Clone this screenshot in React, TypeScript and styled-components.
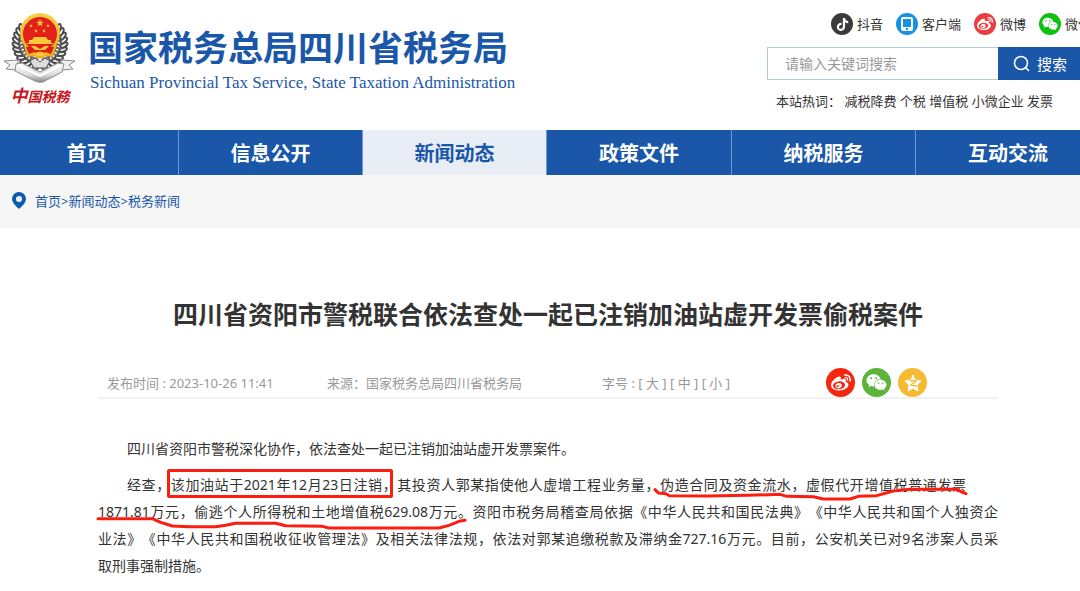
import React from "react";
import styled, { createGlobalStyle, css } from "styled-components";
import { FaTiktok, FaWeibo, FaWeixin } from "react-icons/fa";

const blue = "#1a57a8";
const marker = "#fb1d10";

const GlobalStyle = createGlobalStyle`
  *, *::before, *::after { box-sizing: border-box; }
  body {
    margin: 0;
    background: #fff;
    color: #333;
    font-family: "Noto Sans", "Noto Sans CJK SC", sans-serif;
    font-size: 13px;
    overflow-x: hidden;
  }
  a { color: inherit; text-decoration: none; }
`;

const Header = styled.header`
  display: flex;
  justify-content: space-between;
  height: 130px;
  overflow: hidden;
`;

const Brand = styled.a`
  display: flex;
  gap: 11px;
  padding: 12px 0 0 3px;
  color: ${blue};
  white-space: nowrap;
`;

const EmblemColumn = styled.div`
  display: flex;
  flex-direction: column;
  align-items: center;
  width: 74px;
`;

const EmblemCaption = styled.span`
  color: #c8171e;
  font: italic bold 14px/22px "Noto Sans CJK SC", sans-serif;
`;

const EmblemInitial = styled.span`
  font-size: 17px;
`;

const BrandText = styled.div`
  padding-top: 12px;
`;

const BrandName = styled.div`
  font: bold 35px/44px "Noto Sans CJK SC", sans-serif;
`;

const BrandEnglish = styled.div`
  padding: 2px 0 0 2px;
  font: 17px/26px "Liberation Serif", serif;
`;

const Tools = styled.div`
  flex: none;
  width: 313px;
`;

const Socials = styled.div`
  display: flex;
  gap: 13px;
  height: 47px;
  padding: 13px 0 0 64px;
`;

const SocialLink = styled.a`
  display: flex;
  flex: none;
  gap: 4px;
  height: 22px;
  line-height: 22px;
`;

const Disc = styled.span<{ $color: string; $size: number }>`
  display: flex;
  flex: none;
  align-items: center;
  justify-content: center;
  width: ${(p) => p.$size}px;
  height: ${(p) => p.$size}px;
  border-radius: 50%;
  background: ${(p) => p.$color};
  color: #fff;
`;

const SearchForm = styled.form`
  display: flex;
  height: 33px;
`;

const SearchInput = styled.input`
  flex: 1;
  min-width: 0;
  padding: 0 17px;
  border: 1px solid #b5c8e0;
  border-right: 0;
  border-radius: 0;
  outline: 0;
  font: 14px "Noto Sans", "Noto Sans CJK SC", sans-serif;
  &::placeholder { color: #999; }
`;

const SearchButton = styled.button`
  display: flex;
  align-items: center;
  gap: 7px;
  width: 82px;
  padding: 0 0 0 15px;
  border: 0;
  background: ${blue};
  color: #fff;
  font: 15px "Noto Sans", "Noto Sans CJK SC", sans-serif;
  white-space: nowrap;
`;

const HotWords = styled.div`
  padding: 11px 0 0 9px;
  line-height: 20px;
  white-space: nowrap;
`;

const Nav = styled.nav`
  display: grid;
  grid-template-columns: 179fr 184fr 184fr 185fr 184fr 164fr;
  height: 45px;
  background: ${blue};
`;

const NavLink = styled.a<{ $active?: boolean }>`
  border-right: 1px solid #6f97c9;
  color: #fff;
  font: bold 20px/45px "Noto Sans CJK SC", sans-serif;
  text-align: center;
  white-space: nowrap;
  &:first-child { padding-right: 5px; }
  &:last-child { padding-left: 20px; border-right: 0; }
  ${(p) =>
    p.$active &&
    css`
      background: #e8edf6;
      color: ${blue};
    `}
`;

const Breadcrumb = styled.div`
  display: flex;
  align-items: center;
  gap: 9px;
  height: 53px;
  padding: 0 0 2px 12px;
  background: #f6f6f6;
  color: ${blue};
`;

const Article = styled.article`
  padding: 62px 82px 0 98px;
`;

const Title = styled.h1`
  margin: 0;
  font: bold 25px/46px "Noto Sans CJK SC", sans-serif;
  text-align: center;
`;

const Meta = styled.div`
  display: grid;
  grid-template-columns: 220px 275px 224px 1fr;
  height: 63px;
  padding: 32px 0 0 9px;
  border-bottom: 2px solid #f2f2f2;
  color: #999;
  line-height: 30px;
  white-space: nowrap;
`;

const Share = styled.div`
  display: flex;
  gap: 7px;
`;

const SizeButton = styled.button`
  padding: 0;
  border: 0;
  background: none;
  color: inherit;
  font: inherit;
`;

const Content = styled.div`
  padding-top: 36px;
  font-size: 14px;
  line-height: 27px;
  white-space: nowrap;
  text-spacing-trim: space-all;
`;

const Paragraph = styled.p`
  margin: 0 0 9px;
`;

const Line = styled.span<{ $indent?: boolean; $full?: boolean; $inset?: number }>`
  display: block;
  padding-left: ${(p) => (p.$indent ? 29 : 0)}px;
  padding-right: ${(p) => p.$inset ?? 0}px;
  white-space: normal;
  text-align-last: ${(p) => (p.$full ? "justify" : "left")};
`;

const Boxed = styled.span`
  position: relative;
  &::after {
    content: "";
    position: absolute;
    inset: -6px -10px -4px -4px;
    border: 3px solid ${marker};
    border-radius: 2px;
  }
`;

const Underlined = styled.span`
  position: relative;
`;

const Scribble = styled.svg<{ $top: number }>`
  position: absolute;
  left: 0;
  top: ${(p) => p.$top}px;
  overflow: visible;
  fill: none;
  stroke: ${marker};
  stroke-width: 9;
  stroke-linecap: round;
  stroke-linejoin: round;
`;

const wreath = Array.from({ length: 12 }, (_, i) => {
  const r = 98 + i * 11;
  const t = (r * Math.PI) / 180;
  return { x: 37 + Math.cos(t) * 24, y: 31 + Math.sin(t) * 24, r };
});

function Leaves() {
  return (
    <g>
      {wreath.map((l, i) => (
        <g key={i} transform={`translate(${l.x} ${l.y}) rotate(${l.r})`}>
          <ellipse rx="5" ry="3" fill="#4b4b4b" transform="rotate(35)" />
          <ellipse rx="3" ry="1" fill="#f2f2f2" transform="rotate(35)" />
          <ellipse cx="-5" cy="2" rx="4" ry="3" fill="#666" />
          <ellipse cx="-5" cy="2" rx="2" ry="1" fill="#fff" />
        </g>
      ))}
    </g>
  );
}

function star(cx: number, cy: number, r: number) {
  return Array.from({ length: 10 }, (_, i) => {
    const a = (-90 + i * 36) * (Math.PI / 180);
    const d = i % 2 ? r * 0.42 : r;
    return `${cx + Math.cos(a) * d},${cy + Math.sin(a) * d}`;
  }).join(" ");
}

function Emblem() {
  return (
    <svg width="74" height="72" viewBox="0 0 74 72" aria-hidden="true">
      <defs>
        <linearGradient id="silver" x1="0" y1="0" x2="0" y2="1">
          <stop offset="0" stopColor="#fff" />
          <stop offset="0.6" stopColor="#dcdcdc" />
          <stop offset="1" stopColor="#888" />
        </linearGradient>
        <linearGradient id="gold" x1="0" y1="0" x2="0" y2="1">
          <stop offset="0" stopColor="#fbd04a" />
          <stop offset="1" stopColor="#efae1c" />
        </linearGradient>
      </defs>
      <Leaves />
      <g transform="translate(74 0) scale(-1 1)">
        <Leaves />
      </g>
      <path d="m27 49 5-3 5 4 5-4 5 3-4 7H31z" fill="#ddd" stroke="#555" strokeWidth="1" />
      <circle cx="37" cy="21" r="20" fill="url(#gold)" />
      <path d="m21 33 33 0-4 12-6-1-7 3-7-3-6 1z" fill="#efae1c" />
      <circle cx="37" cy="22" r="17" fill="#e3211b" />
      <path d="m23 35 6 0 8 4 8-4h6l-3 7-5-2-6 3-6-3-5 2z" fill="#d91f1a" />
      <polygon points={star(37, 11, 4)} fill="#fbc93a" />
      <polygon points={star(28, 14, 2)} fill="#fbc93a" />
      <polygon points={star(45, 14, 2)} fill="#fbc93a" />
      <polygon points={star(33, 19, 2)} fill="#fbc93a" />
      <polygon points={star(41, 19, 2)} fill="#fbc93a" />
      <path d="M31 25h12l2 3h3v3h2v1H24v-1h2v-3h3z" fill="#fbc93a" />
      <path d="m28 34 4 0 5 3 5-3h4l-4 4H32z" fill="#fbc93a" />
      <path d="M31 42q6-5 12 0l-3 2h-6z" fill="#fbc93a" />
      <path d="m1 49 14-1-1 10-11-1 4-4zM72 49l-14-1 1 10 11-1-4-4z" fill="#f2f2f2" stroke="#8b8b8b" strokeWidth="1" />
      <path d="m13 52 6-1 18 9 18-9 6 1-2 8-19 10q-4 1-8-1L12 59z" fill="url(#silver)" stroke="#8e8e8e" strokeWidth="1" />
      <path d="m16 54 21 10 20-10" fill="none" stroke="#fff" strokeWidth="2" />
    </svg>
  );
}

function DeviceIcon() {
  return (
    <svg width="12" height="14" viewBox="0 0 12 14" aria-hidden="true">
      <path fillRule="evenodd" d="M2 0h8q2 0 2 2v10q0 2-2 2H2q-2 0-2-2V2q0-2 2-2zm0 2v8h8V2zm3 9v2h2v-2z" fill="#fff" />
    </svg>
  );
}

function QzoneIcon() {
  return (
    <svg width="20" height="20" viewBox="0 0 20 20" aria-hidden="true">
      <path
        d="m10 2 2 5 6 1-4 4 1 6-5-3-5 3 1-6-4-4 6-1z"
        fill="#fff"
        stroke="#fff"
        strokeWidth="1"
        strokeLinejoin="round"
      />
      <path d="M7 8q3-1 6 0l-5 4q3 1 6 1" fill="none" stroke="#f6ba32" strokeWidth="1.400" />
    </svg>
  );
}

function PinIcon() {
  return (
    <svg width="14" height="17" viewBox="0 0 14 17" aria-hidden="true">
      <path fillRule="evenodd" d="M7 0a7 7 0 0 1 7 7q0 4-7 10Q0 11 0 7a7 7 0 0 1 7-7zm0 4a3 3 0 1 0 0 6 3 3 0 0 0 0-6z" fill="#0b5bb3" />
    </svg>
  );
}

function SearchIcon() {
  return (
    <svg width="17" height="17" viewBox="0 0 17 17" fill="none" stroke="#fff" strokeWidth="1.600" aria-hidden="true">
      <circle cx="8" cy="8" r="6.500" />
      <path d="m12 12 4 4" />
    </svg>
  );
}

const socials = [
  { label: "抖音", color: "#3b3b3b", icon: <FaTiktok size={13} /> },
  { label: "客户端", color: "#1593e2", icon: <DeviceIcon /> },
  { label: "微博", color: "#ec3d43", icon: <FaWeibo size={16} /> },
  { label: "微信", color: "#0cc10f", icon: <FaWeixin size={16} /> },
];

const navItems = ["首页", "信息公开", "新闻动态", "政策文件", "纳税服务", "互动交流"];
const hotWords = ["减税降费", "个税", "增值税", "小微企业", "发票"];

export default function App() {
  return (
    <>
      <GlobalStyle />
      <Header>
        <Brand href="#">
          <EmblemColumn>
            <Emblem />
            <EmblemCaption>
              <EmblemInitial>中</EmblemInitial>国税務
            </EmblemCaption>
          </EmblemColumn>
          <BrandText>
            <BrandName>国家税务总局四川省税务局</BrandName>
            <BrandEnglish>Sichuan Provincial Tax Service, State Taxation Administration</BrandEnglish>
          </BrandText>
        </Brand>
        <Tools>
          <Socials>
            {socials.map((s) => (
              <SocialLink href="#" key={s.label}>
                <Disc $color={s.color} $size={22}>{s.icon}</Disc>
                {s.label}
              </SocialLink>
            ))}
          </Socials>
          <SearchForm onSubmit={(e) => e.preventDefault()}>
            <SearchInput type="text" placeholder="请输入关键词搜索" aria-label="请输入关键词搜索" />
            <SearchButton type="submit">
              <SearchIcon />
              搜索
            </SearchButton>
          </SearchForm>
          <HotWords>
            本站热词：{" "}
            {hotWords.map((w) => (
              <React.Fragment key={w}>
                <a href="#">{w}</a>{" "}
              </React.Fragment>
            ))}
          </HotWords>
        </Tools>
      </Header>
      <Nav>
        {navItems.map((n) => (
          <NavLink href="#" key={n} $active={n === "新闻动态"}>{n}</NavLink>
        ))}
      </Nav>
      <Breadcrumb>
        <PinIcon />
        <span>
          <a href="#">首页</a>&gt;<a href="#">新闻动态</a>&gt;<a href="#">税务新闻</a>
        </span>
      </Breadcrumb>
      <Article>
        <Title>四川省资阳市警税联合依法查处一起已注销加油站虚开发票偷税案件</Title>
        <Meta>
          <span>发布时间 : 2023-10-26 11:41</span>
          <span>来源：国家税务总局四川省税务局</span>
          <span>
            字号 : <SizeButton>[ 大 ]</SizeButton> <SizeButton>[ 中 ]</SizeButton> <SizeButton>[ 小 ]</SizeButton>
          </span>
          <Share>
            <a href="#" aria-label="微博"><Disc $color="#f5270f" $size={29}><FaWeibo size={20} /></Disc></a>
            <a href="#" aria-label="微信"><Disc $color="#5bb53a" $size={29}><FaWeixin size={21} /></Disc></a>
            <a href="#" aria-label="QQ空间"><Disc $color="#f6ba32" $size={29}><QzoneIcon /></Disc></a>
          </Share>
        </Meta>
        <Content>
          <Paragraph>
            <Line $indent>四川省资阳市警税深化协作，依法查处一起已注销加油站虚开发票案件。</Line>
          </Paragraph>
          <Paragraph>
            <Line $indent $full $inset={32}>
              经查，<Boxed>该加油站于2021年12月23日注销</Boxed>，其投资人郭某指使他人虚增工程业务量，<Underlined>
                伪造合同及资金流水，虚假代开增值税普通发票
                <Scribble $top={12} width="313" height="14" viewBox="15 0 939 42" aria-hidden="true">
                  <path d="M0 8 10 18 33 20 43 26 155 27 280 25 375 22 395 28 475 29 505 36H585L610 28 665 26 715 12 765 7H905L920 15 933 20" />
                </Scribble>
              </Underlined>
            </Line>
            <Line $full>
              <Underlined>
                1871.81万元，偷逃个人所得税和土地增值税629.08万元。
                <Scribble $top={15} width="368" height="12" viewBox="0 0 1104 36" aria-hidden="true">
                  <path d="M0 5H163L188 16 223 27 273 29H353L383 25 413 19H533L563 26 673 28 693 33H1023L1053 25 1083 13 1101 10" />
                </Scribble>
              </Underlined>资阳市税务局稽查局依据《中华人民共和国民法典》《中华人民共和国个人独资企
            </Line>
            <Line $full>业法》《中华人民共和国税收征收管理法》及相关法律法规，依法对郭某追缴税款及滞纳金727.16万元。目前，公安机关已对9名涉案人员采</Line>
            <Line>取刑事强制措施。</Line>
          </Paragraph>
        </Content>
      </Article>
    </>
  );
}
